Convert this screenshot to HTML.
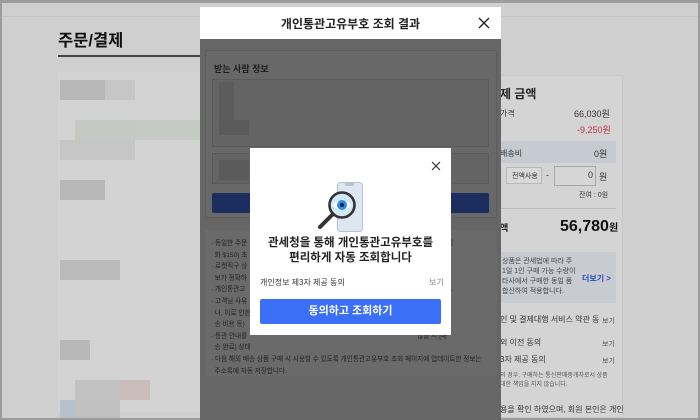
<!DOCTYPE html>
<html><head><meta charset="utf-8"><style>
*{margin:0;padding:0;box-sizing:border-box}
body{width:700px;height:420px;overflow:hidden;background:#9c9c9c;font-family:"Liberation Sans","Noto Sans CJK KR",sans-serif;position:relative}
.a{position:absolute}
.page{left:2px;top:3px;width:696px;height:415px;background:#cfcfcf}
.t{white-space:nowrap}
</style></head><body>
<div class="a page"></div>
<div class="a" style="left:2px;top:16px;width:696px;height:1px;background:#c4c4c4"></div>
<div class="a t" style="left:58px;top:27px;font-size:16.5px;font-weight:bold;color:#111">주문/결제</div>
<div class="a" style="left:58px;top:55px;width:409px;height:2px;background:#444"></div>
<div class="a t" style="left:410px;top:30px;font-size:10px;font-weight:bold;color:#2f4fb3">주문결제 <span style="color:#888;font-weight:normal">&gt; 주문완료</span></div>
<!-- left blurred -->
<div class="a" style="left:58px;top:72px;width:142px;height:340px;background:#d3d3d3"></div>
<div class="a" style="left:60px;top:80px;width:45px;height:20px;background:#b8b8b8"></div>
<div class="a" style="left:105px;top:80px;width:30px;height:20px;background:#c6c6c6"></div>
<div class="a" style="left:75px;top:120px;width:60px;height:20px;background:#c6c8c4"></div>
<div class="a" style="left:135px;top:120px;width:65px;height:20px;background:#c6cac4"></div>
<div class="a" style="left:60px;top:140px;width:75px;height:20px;background:#c6c6c6"></div>
<div class="a" style="left:60px;top:180px;width:45px;height:20px;background:#b8b8b8"></div>
<div class="a" style="left:60px;top:260px;width:60px;height:20px;background:#bababa"></div>
<div class="a" style="left:60px;top:340px;width:30px;height:20px;background:#b8b8b8"></div>
<div class="a" style="left:75px;top:380px;width:45px;height:20px;background:#c2c2c2"></div>
<div class="a" style="left:120px;top:380px;width:30px;height:20px;background:#cbbcbc"></div>
<div class="a" style="left:60px;top:400px;width:15px;height:18px;background:#b8bfcd"></div>
<div class="a" style="left:75px;top:400px;width:45px;height:18px;background:#c0c0c0"></div>
<!-- right card -->
<div class="a" style="left:480px;top:75px;width:143px;height:343px;background:#d4d4d4;border:1px solid #c8c8c8"></div>
<div class="a t" style="left:500px;top:85px;font-size:12px;font-weight:bold;color:#222">제 금액</div>
<div class="a t" style="left:500px;top:108px;font-size:8px;color:#333">가격</div>
<div class="a t" style="left:574px;top:107px;font-size:9px;color:#333">66,030원</div>
<div class="a t" style="left:577px;top:123px;font-size:9px;color:#c0334a">-9,250원</div>
<div class="a" style="left:500px;top:141px;width:116px;height:22px;background:#c5cad3"></div>
<div class="a t" style="left:500px;top:148px;font-size:8px;color:#333">배송비</div>
<div class="a t" style="left:594px;top:147px;font-size:9px;color:#333">0원</div>
<div class="a" style="left:506px;top:167px;width:36px;height:17px;background:#d9d9d9;border:1px solid #b8b8b8"></div>
<div class="a t" style="left:512px;top:171px;font-size:7px;color:#333">전액사용</div>
<div class="a t" style="left:546px;top:170px;font-size:9px;color:#333">-</div>
<div class="a" style="left:554px;top:166px;width:42px;height:20px;background:#d6d6d6;border:1px solid #a8a8a8"></div>
<div class="a t" style="left:588px;top:170px;font-size:9px;color:#333">0</div>
<div class="a t" style="left:599px;top:170px;font-size:9px;color:#333">원</div>
<div class="a t" style="left:579px;top:190px;font-size:7px;color:#333">잔여 : 0원</div>
<div class="a" style="left:500px;top:208px;width:116px;height:1px;background:#bdbdbd"></div>
<div class="a t" style="left:500px;top:221px;font-size:9px;font-weight:bold;color:#222">액</div>
<div class="a t" style="left:560px;top:218px;font-size:16px;font-weight:bold;color:#111">56,780<span style="font-size:10px">원</span></div>
<div class="a" style="left:500px;top:252px;width:116px;height:51px;background:#c8cbd0"></div>
<div class="a" style="left:502px;top:257px;font-size:7px;line-height:10px;color:#444">상품은 관세법에 따라 주<br>1일 1인 구매 가능 수량이<br>타사에서 구매한 동일 품<br>합산하여 적용합니다.</div>
<div class="a t" style="left:582px;top:273px;font-size:8px;font-weight:bold;color:#2f4fb3">더보기 &gt;</div>
<div class="a t" style="left:500px;top:314px;font-size:8px;color:#333">인 및 결제대행 서비스 약관 동</div>
<div class="a t" style="left:602px;top:316px;font-size:7px;color:#555">보기</div>
<div class="a t" style="left:500px;top:337px;font-size:8px;color:#333">외 이전 동의</div>
<div class="a t" style="left:602px;top:339px;font-size:7px;color:#555">보기</div>
<div class="a t" style="left:500px;top:354px;font-size:8px;color:#333">3자 제공 동의</div>
<div class="a t" style="left:602px;top:356px;font-size:7px;color:#555">보기</div>
<div class="a" style="left:500px;top:372px;font-size:6px;line-height:9px;color:#555">의 경우, 구매하는 통신판매중개자로서 상품<br>대한 책임을 지지 않습니다.</div>
<div class="a" style="left:500px;top:404px;font-size:8px;line-height:12px;color:#333;white-space:nowrap">용을 확인 하였으며, 회원 본인은 개인</div>
<!-- big modal -->
<div class="a" style="left:200px;top:7px;width:301px;height:32px;background:#fff"></div>
<div class="a t" style="left:200px;top:15px;width:301px;text-align:center;font-size:12px;font-weight:bold;color:#222">개인통관고유부호 조회 결과</div>
<svg class="a" style="left:477px;top:16px" width="14" height="14"><path d="M2 2L12 12M12 2L2 12" stroke="#222" stroke-width="1.4"/></svg>
<div class="a" style="left:200px;top:39px;width:301px;height:381px;background:#666"></div>
<div class="a" style="left:205px;top:50px;width:292px;height:168px;background:#686868;border:1px solid #5e5e5e"></div>
<div class="a t" style="left:214px;top:62px;font-size:9px;font-weight:bold;color:#1e1e1e">받는 사람 정보</div>
<div class="a" style="left:212px;top:79px;width:277px;height:68px;background:#646464;border:1px solid #5a5a5a"></div>
<div class="a" style="left:219px;top:82px;width:15px;height:38px;background:#5c5c5c"></div>
<div class="a" style="left:219px;top:120px;width:30px;height:15px;background:#5b5b5b"></div>
<div class="a" style="left:212px;top:153px;width:277px;height:31px;background:#646464;border:1px solid #5a5a5a"></div>
<div class="a" style="left:219px;top:160px;width:30px;height:20px;background:#5b5b5b"></div>
<div class="a" style="left:212px;top:193px;width:277px;height:20px;background:#1c2d5f;border-radius:2px"></div>
<div class="a" style="left:205px;top:230px;width:292px;height:146px;background:#6a6a6a"></div>
<div class="a" style="left:211px;top:238px;font-size:6.6px;line-height:11.6px;color:#222;width:284px;white-space:nowrap">
· 동일한 주문<span style="margin-left:170px">그 외 국가 미</span><br>&nbsp;&nbsp;화 $150) 초<br>· 로켓직구 상<span style="margin-left:170px">필요하며, 정</span><br>&nbsp;&nbsp;보가 정확하<br>· 개인통관고<span style="margin-left:175px">불가합니다.</span><br>· 고객님 사유<span style="margin-left:170px">기 지연되거</span><br>&nbsp;&nbsp;나, 이로 인한<span style="margin-left:165px">] 가격 및 배</span><br>&nbsp;&nbsp;송 비용 등)<br>· 통관 안내를<span style="margin-left:170px">않을 시 [배</span><br>&nbsp;&nbsp;송 완료] 상태<br>· 다음 해외 배송 상품 구매 시 사용할 수 있도록 개인통관고유부호 조회 페이지에 업데이트한 정보는<br>&nbsp;&nbsp;주소록에 자동 저장합니다.</div>
<!-- small modal -->
<div class="a" style="left:250px;top:148px;width:201px;height:187px;background:#fff"></div>
<svg class="a" style="left:431px;top:161px" width="10" height="10"><path d="M1 1L9 9M9 1L1 9" stroke="#333" stroke-width="1.2"/></svg>
<svg class="a" style="left:314px;top:180px" width="52" height="54" viewBox="0 0 52 54">
<rect x="23.5" y="2.5" width="25" height="49" rx="3" fill="#dde6f1" stroke="#b7c3d2"/>
<path d="M31 3h9v1.5a1.5 1.5 0 0 1-1.5 1.5h-6a1.5 1.5 0 0 1-1.5-1.5z" fill="#b7c3d2"/>
<path d="M19 34L6 47" stroke="#333" stroke-width="4" stroke-linecap="round"/>
<circle cx="28" cy="25" r="12.5" fill="#cfe7f8" stroke="#333" stroke-width="2.6"/>
<path d="M18 25q10-9 20 0q-10 9-20 0z" fill="#fff"/>
<circle cx="28" cy="25" r="5" fill="#2d8ce8"/>
<circle cx="28" cy="25" r="2" fill="#12203a"/>
</svg>
<div class="a" style="left:250px;top:236px;width:201px;text-align:center;font-size:11.5px;line-height:15px;font-weight:bold;color:#222">관세청을 통해 개인통관고유부호를<br>편리하게 자동 조회합니다</div>
<div class="a t" style="left:260px;top:277px;font-size:8px;color:#333">개인정보 제3자 제공 동의</div>
<div class="a t" style="left:429px;top:277px;font-size:8px;color:#888">보기</div>
<div class="a" style="left:260px;top:299px;width:181px;height:25px;background:#3b6ff7;border-radius:2px;color:#fff;font-size:11px;font-weight:bold;text-align:center;line-height:25px">동의하고 조회하기</div>
</body></html>
